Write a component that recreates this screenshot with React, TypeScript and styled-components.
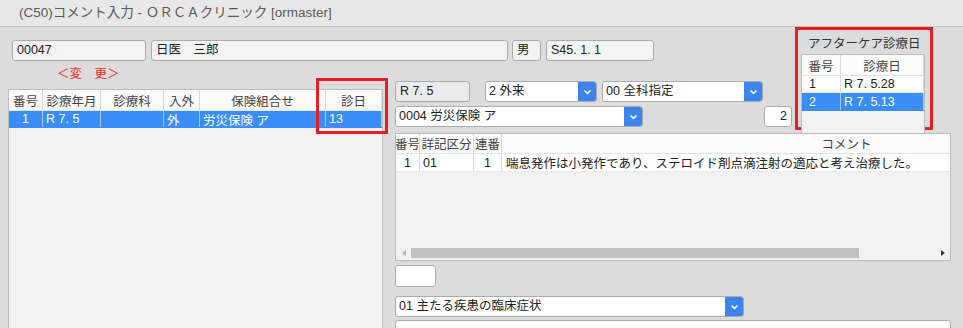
import React from 'react';
import styled, { createGlobalStyle } from 'styled-components';

const GlobalStyle = createGlobalStyle`
  *, *::before, *::after { box-sizing: border-box; }
  html, body { margin: 0; padding: 0; background: #dcdcdc; overflow: hidden; }
  body {
    font-family: "Liberation Sans", "Noto Sans CJK JP", sans-serif;
    font-size: 12.5px;
    color: #222;
  }
`;

const Page = styled.div`
  width: 963px;
  height: 328px;
  display: flex;
  flex-direction: column;
  overflow: hidden;
`;

const TitleBar = styled.div`
  height: 27px;
  flex: none;
  padding-left: 19px;
  line-height: 26px;
  font-size: 13.5px;
  color: #5a5a5a;
  background: #e8e8e8;
  border-bottom: 1px solid #c4c4c4;
`;

const Content = styled.div`
  flex: 1;
  display: grid;
  grid-template-columns: 383px 412px 138px 1fr;
  grid-template-rows: 36px 68px 1fr;
  grid-template-areas:
    "top top after ."
    "left right after ."
    "left bottom bottom bottom";
  min-height: 0;
`;

const PatientRow = styled.div`
  grid-area: top;
  display: flex;
  align-items: flex-start;
  padding: 13px 0 0 12px;
`;

const Field = styled.div<{ $w: number; $gap?: number; $bg?: string; $align?: string; $h?: number }>`
  width: ${p => p.$w}px;
  height: ${p => p.$h ?? 21}px;
  margin-left: ${p => p.$gap ?? 0}px;
  flex: none;
  padding: 0 4px;
  line-height: ${p => (p.$h ?? 21) - 2}px;
  text-align: ${p => p.$align ?? 'left'};
  white-space: nowrap;
  overflow: hidden;
  background: ${p => p.$bg ?? '#f3f3f3'};
  border: 1px solid #ababab;
  border-radius: 3px;
`;

const LeftPane = styled.div`
  grid-area: left;
  display: flex;
  flex-direction: column;
  padding-left: 8px;
  min-height: 0;
`;

const ChangeLabel = styled.div`
  height: 26px;
  flex: none;
  padding-left: 49px;
  line-height: 22px;
  color: #ef2b2b;
`;

const TableWrap = styled.div`
  position: relative;
  flex: none;
  width: 375px;
`;

const Table = styled.div<{ $h?: number; $w?: number }>`
  height: ${p => (p.$h ? `${p.$h}px` : '100%')};
  width: ${p => (p.$w ? `${p.$w}px` : 'auto')};
  flex: none;
  display: flex;
  flex-direction: column;
  background: #f2f2f2;
  border: 1px solid #bcbcbc;
  overflow: hidden;
`;

const RowGrid = styled.div<{ $cols: string }>`
  display: grid;
  grid-template-columns: ${p => p.$cols};
  flex: none;
`;

const HeadRow = styled(RowGrid)<{ $h?: number }>`
  height: ${p => p.$h ?? 21}px;
  background: #fbfbfb;
  color: #444;
  border-bottom: 1px solid #e4e4e4;
`;

const Row = styled(RowGrid)<{ $selected?: boolean; $h?: number }>`
  height: ${p => p.$h ?? 17}px;
  background: ${p => (p.$selected ? '#3a8df6' : '#ffffff')};
  color: ${p => (p.$selected ? '#ffffff' : '#222')};
  border-bottom: 1px solid ${p => (p.$selected ? '#3a8df6' : '#e8e8e8')};
`;

const Cell = styled.div<{ $align?: string; $pad?: number; $light?: boolean }>`
  padding: 0 ${p => p.$pad ?? 3}px;
  white-space: nowrap;
  overflow: hidden;
  display: flex;
  align-items: center;
  justify-content: ${p => (p.$align === 'center' ? 'center' : p.$align === 'right' ? 'flex-end' : 'flex-start')};
  border-right: 1px solid ${p => (p.$light ? 'rgba(255,255,255,0.55)' : '#dadada')};
`;

const RedMark = styled.div`
  position: absolute;
  left: 308px;
  top: -11px;
  width: 72px;
  height: 56px;
  border: 3px solid #e41f25;
  pointer-events: none;
`;

const RightPane = styled.div`
  grid-area: right;
  display: flex;
  flex-direction: column;
  gap: 4px;
  padding: 18px 3px 0 12px;
`;

const ControlRow = styled.div<{ $spread?: boolean }>`
  display: flex;
  align-items: center;
  justify-content: ${p => (p.$spread ? 'space-between' : 'flex-start')};
`;

const ComboBox = styled.div<{ $w: number; $gap?: number; $top?: number }>`
  width: ${p => p.$w}px;
  height: 21px;
  margin-left: ${p => p.$gap ?? 0}px;
  margin-top: ${p => p.$top ?? 0}px;
  flex: none;
  display: flex;
  background: #ffffff;
  border: 1px solid #ababab;
  border-radius: 3px;
  overflow: hidden;
`;

const ComboText = styled.div`
  flex: 1;
  padding-left: 3px;
  line-height: 19px;
  white-space: nowrap;
  overflow: hidden;
`;

const ComboButton = styled.div`
  width: 18px;
  flex: none;
  display: flex;
  align-items: center;
  justify-content: center;
  background: #3c85ef;
`;

const AfterBox = styled.div`
  grid-area: after;
  align-self: start;
  height: 103px;
  display: flex;
  flex-direction: column;
  padding: 0 5px 0 3px;
  border: 3px solid #e41f25;
`;

const AfterTitle = styled.div`
  height: 24px;
  flex: none;
  padding: 4px 0 0 7px;
  line-height: 20px;
  color: #333;
`;

const BottomPane = styled.div`
  grid-area: bottom;
  display: flex;
  flex-direction: column;
  align-items: flex-start;
  padding: 2px 12px 0 12px;
  min-height: 0;
`;

const Gap = styled.div<{ $h: number }>`
  height: ${p => p.$h}px;
  flex: none;
`;

const ScrollBar = styled.div`
  margin-top: auto;
  margin-bottom: 2px;
  height: 10px;
  flex: none;
  display: flex;
  align-items: center;
`;

const Arrow = styled.div<{ $dir: 'left' | 'right'; $dark?: boolean }>`
  width: 15px;
  height: 10px;
  flex: none;
  display: flex;
  align-items: center;
  justify-content: center;
  &::before {
    content: '';
    border-top: 3px solid transparent;
    border-bottom: 3px solid transparent;
    ${p => (p.$dir === 'left' ? 'border-right' : 'border-left')}: 4px solid ${p => (p.$dark ? '#333' : '#b4b4b4')};
  }
`;

const Thumb = styled.div`
  width: 448px;
  height: 10px;
  background: #c0c0c0;
`;

const Spacer = styled.div`
  flex: 1;
`;

const Chevron = () => (
  <svg width="9" height="6" viewBox="0 0 9 6">
    <polyline points="1.5,1.5 4.5,4.3 7.5,1.5" fill="none" stroke="#fff" strokeWidth="1.6" />
  </svg>
);

const Combo: React.FC<{ w: number; gap?: number; text: string }> = ({ w, gap, text }) => (
  <ComboBox $w={w} $gap={gap}>
    <ComboText>{text}</ComboText>
    <ComboButton>
      <Chevron />
    </ComboButton>
  </ComboBox>
);

const leftCols = '34px 58px 63px 36px 126px 1fr';
const commentCols = '24px 54px 28px 690px';
const afterCols = '39px 1fr';

export default function App() {
  return (
    <Page>
      <GlobalStyle />
      <TitleBar>(C50)コメント入力 - ＯＲＣＡクリニック [ormaster]</TitleBar>
      <Content>
        <PatientRow>
          <Field $w={134}>00047</Field>
          <Field $w={357} $gap={5}>日医　三郎</Field>
          <Field $w={29} $gap={4}>男</Field>
          <Field $w={108} $gap={5}>S45. 1. 1</Field>
        </PatientRow>

        <LeftPane>
          <ChangeLabel>＜変　更＞</ChangeLabel>
          <TableWrap>
            <Table $h={260}>
              <HeadRow $cols={leftCols}>
                <Cell $align="center">番号</Cell>
                <Cell $align="center">診療年月</Cell>
                <Cell $align="center">診療科</Cell>
                <Cell $align="center">入外</Cell>
                <Cell $align="center">保険組合せ</Cell>
                <Cell $align="center">診日</Cell>
              </HeadRow>
              <Row $cols={leftCols} $selected>
                <Cell $align="center" $light>1</Cell>
                <Cell $light>R 7. 5</Cell>
                <Cell $light />
                <Cell $light>外</Cell>
                <Cell $light>労災保険 ア</Cell>
                <Cell $light>13</Cell>
              </Row>
            </Table>
            <RedMark />
          </TableWrap>
        </LeftPane>

        <RightPane>
          <ControlRow>
            <Field $w={75} $bg="#ebebeb">R 7. 5</Field>
            <Combo w={112} gap={15} text="2 外来" />
            <Combo w={161} gap={5} text="00 全科指定" />
          </ControlRow>
          <ControlRow $spread>
            <Combo w={248} text="0004 労災保険 ア" />
            <Field $w={28} $bg="#ffffff" $align="right">2</Field>
          </ControlRow>
        </RightPane>

        <AfterBox>
          <AfterTitle>アフターケア診療日</AfterTitle>
          <Table>
            <HeadRow $cols={afterCols}>
              <Cell $align="center">番号</Cell>
              <Cell $align="center">診療日</Cell>
            </HeadRow>
            <Row $cols={afterCols}>
              <Cell $pad={7}>1</Cell>
              <Cell>R 7. 5.28</Cell>
            </Row>
            <Row $cols={afterCols} $selected $h={18}>
              <Cell $pad={7} $light>2</Cell>
              <Cell $light>R 7. 5.13</Cell>
            </Row>
          </Table>
        </AfterBox>

        <BottomPane>
          <Table $h={128} $w={556}>
            <HeadRow $cols={commentCols} $h={20}>
              <Cell $align="center" $pad={0}>番号</Cell>
              <Cell $align="center" $pad={0}>詳記区分</Cell>
              <Cell $align="center" $pad={0}>連番</Cell>
              <Cell $align="center">コメント</Cell>
            </HeadRow>
            <Row $cols={commentCols} $h={18}>
              <Cell $align="center">1</Cell>
              <Cell>01</Cell>
              <Cell $align="center">1</Cell>
              <Cell $pad={4}>喘息発作は小発作であり、ステロイド剤点滴注射の適応と考え治療した。</Cell>
            </Row>
            <ScrollBar>
              <Arrow $dir="left" />
              <Thumb />
              <Spacer />
              <Arrow $dir="right" $dark />
            </ScrollBar>
          </Table>
          <Gap $h={4} />
          <Field $w={41} $h={22} $bg="#ffffff" />
          <Gap $h={9} />
          <Combo w={349} text="01 主たる疾患の臨床症状" />
          <Gap $h={3} />
          <Field $w={556} $h={24} $bg="#ffffff" />
        </BottomPane>
      </Content>
    </Page>
  );
}
